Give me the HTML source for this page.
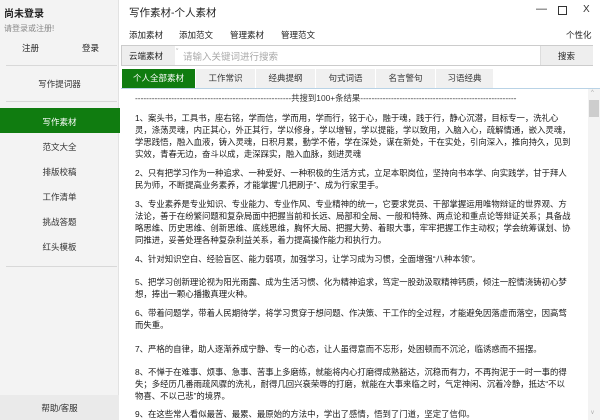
<!DOCTYPE html>
<html><head><meta charset="utf-8">
<style>
*{margin:0;padding:0;box-sizing:border-box}
body{width:600px;height:420px;overflow:hidden;background:#fff;font-family:"Liberation Sans","Noto Sans CJK SC",sans-serif;color:#222;position:relative}
.a{position:absolute;white-space:nowrap}
#side{position:absolute;left:0;top:0;width:119px;height:420px;background:#f3f3f3;border-right:1px solid #e2e2e2}
.nav{position:absolute;left:0;width:119px;text-align:center;font-size:8.5px;color:#333}
.hr{position:absolute;left:6px;width:111px;height:1px;background:#d8d8d8}
.t{position:absolute;top:69px;height:19px;background:#f0f0f0;font-size:8.5px;text-align:center;line-height:19px;color:#333}
.p{position:absolute;left:135px;font-size:8.4px;line-height:12px;white-space:nowrap;color:#1a1a1a}
</style></head><body>
<div id="side">
<div class="a" style="left:4px;top:5px;font-size:10px;font-weight:bold;color:#222">尚未登录</div>
<div class="a" style="left:4px;top:23px;font-size:8px;color:#888">请登录或注册!</div>
<div class="a" style="left:22px;top:42px;font-size:8.5px">注册</div>
<div class="a" style="left:82px;top:42px;font-size:8.5px">登录</div>
<div class="hr" style="top:65px"></div>
<div class="nav" style="top:78px">写作提词器</div>
<div class="hr" style="top:101px"></div>
<div style="position:absolute;left:0;top:108px;width:120px;height:25px;background:#107c10"></div>
<div class="nav" style="top:116px;color:#fff">写作素材</div>
<div class="nav" style="top:141px">范文大全</div>
<div class="nav" style="top:166px">排版校稿</div>
<div class="nav" style="top:191px">工作清单</div>
<div class="nav" style="top:216px">挑战答题</div>
<div class="nav" style="top:241px">红头模板</div>
<div class="hr" style="top:266px"></div>
<div style="position:absolute;left:0;top:395px;width:119px;height:25px;background:#eaeaea"></div>
<div class="nav" style="top:402px">帮助/客服</div>
</div>

<div class="a" style="left:129px;top:5px;font-size:10.5px;color:#222">写作素材-个人素材</div>
<div class="a" style="left:536px;top:3px;font-size:11px;color:#333">—</div>
<div class="a" style="left:558px;top:6px;width:9px;height:9px;border:1px solid #333"></div>
<div class="a" style="left:583px;top:4px;font-size:10px;color:#333">X</div>

<div class="a" style="left:129px;top:29px;font-size:8.5px">添加素材</div>
<div class="a" style="left:179px;top:29px;font-size:8.5px">添加范文</div>
<div class="a" style="left:230px;top:29px;font-size:8.5px">管理素材</div>
<div class="a" style="left:281px;top:29px;font-size:8.5px">管理范文</div>
<div class="a" style="left:566px;top:29px;font-size:8.5px">个性化</div>

<div class="a" style="left:121px;top:45px;width:472px;height:21px;border:1px solid #ccc;background:#fff"></div>
<div class="a" style="left:122px;top:46px;width:53px;height:19px;background:#eeeeee"></div>
<div class="a" style="left:129px;top:50px;font-size:8.5px">云端素材</div>
<div class="a" style="left:176px;top:49px;font-size:7px;color:#888">ˇ</div>
<div class="a" style="left:183px;top:49px;font-size:9.5px;color:#aaa">请输入关键词进行搜索</div>
<div class="a" style="left:540px;top:46px;width:53px;height:19px;background:#eeeeee;border-left:1px solid #ddd"></div>
<div class="a" style="left:558px;top:50px;font-size:8.5px">搜索</div>

<div class="t" style="left:122px;width:73px;background:#107c10;color:#fff">个人全部素材</div>
<div class="t" style="left:196px;width:59px">工作常识</div>
<div class="t" style="left:256px;width:59px">经典提纲</div>
<div class="t" style="left:316px;width:59px">句式词语</div>
<div class="t" style="left:376px;width:59px">名言警句</div>
<div class="t" style="left:436px;width:57px">习语经典</div>
<div class="a" style="left:121px;top:88px;width:479px;height:1px;background:#b9d3e6"></div>

<div class="a" style="left:588px;top:89px;width:12px;height:331px;background:#f3f3f3"></div>
<div class="a" style="left:589px;top:100px;width:10px;height:17px;background:#cdcdcd"></div>
<div class="a" style="left:591px;top:90px;font-size:6px;color:#aaa">^</div>
<div class="a" style="left:591px;top:410px;font-size:6px;color:#aaa">v</div>

<div class="p" style="top:92px;left:135px;color:#333">--------------------------------------------------------共搜到100+条结果--------------------------------------------------------</div>

<div class="p" style="top:112px">1、案头书，工具书，座右铭，学而信，学而用，学而行，铭于心，融于魂，践于行，静心沉潜，目标专一，洗礼心<br>灵，涤荡灵魂，内正其心，外正其行，学以修身，学以增智，学以提能，学以致用，入脑入心，疏解情通，嵌入灵魂，<br>学思践悟，融入血液，铸入灵魂，日积月累，勤学不倦，学在深处，谋在新处，干在实处，引向深入，推向持久，见到<br>实效，青春无边，奋斗以成，走深踩实，融入血脉，刻进灵魂</div>
<div class="p" style="top:167px">2、只有把学习作为一种追求、一种爱好、一种积极的生活方式，立足本职岗位，坚持向书本学、向实践学，甘于拜人<br>民为师，不断提高业务素养，才能掌握“几把刷子”、成为行家里手。</div>
<div class="p" style="top:198px">3、专业素养是专业知识、专业能力、专业作风、专业精神的统一，它要求党员、干部掌握运用唯物辩证的世界观、方<br>法论，善于在纷繁问题和复杂局面中把握当前和长远、局部和全局、一般和特殊、两点论和重点论等辩证关系；具备战<br>略思维、历史思维、创新思维、底线思维，胸怀大局、把握大势、着眼大事，牢牢把握工作主动权；学会统筹谋划、协<br>同推进，妥善处理各种复杂利益关系，着力提高操作能力和执行力。</div>
<div class="p" style="top:253px">4、针对知识空白、经验盲区、能力弱项，加强学习，让学习成为习惯，全面增强“八种本领”。</div>
<div class="p" style="top:276px">5、把学习创新理论视为阳光雨露、成为生活习惯、化为精神追求，笃定一股劲汲取精神钙质，倾注一腔情浇铸初心梦<br>想，捧出一颗心播撒真理火种。</div>
<div class="p" style="top:307px">6、带着问题学，带着人民期待学，将学习贯穿于想问题、作决策、干工作的全过程，才能避免因落虚而落空，因高骛<br>而失重。</div>
<div class="p" style="top:343px">7、严格的自律，助人逐渐养成宁静、专一的心态，让人虽得意而不忘形，处困顿而不沉沦，临诱惑而不摇摆。</div>
<div class="p" style="top:366px">8、不惮于在难事、烦事、急事、苦事上多磨练，就能将内心打磨得成熟豁达，沉稳而有力，不再拘泥于一时一事的得<br>失；多经历几番雨疏风骤的洗礼，耐得几回兴衰荣辱的打磨，就能在大事来临之时，气定神闲、沉着冷静，抵达“不以<br>物喜、不以己悲”的境界。</div>
<div class="p" style="top:408px">9、在这些常人看似最苦、最累、最原始的方法中，学出了感情，悟到了门道，坚定了信仰。</div>
</body></html>
